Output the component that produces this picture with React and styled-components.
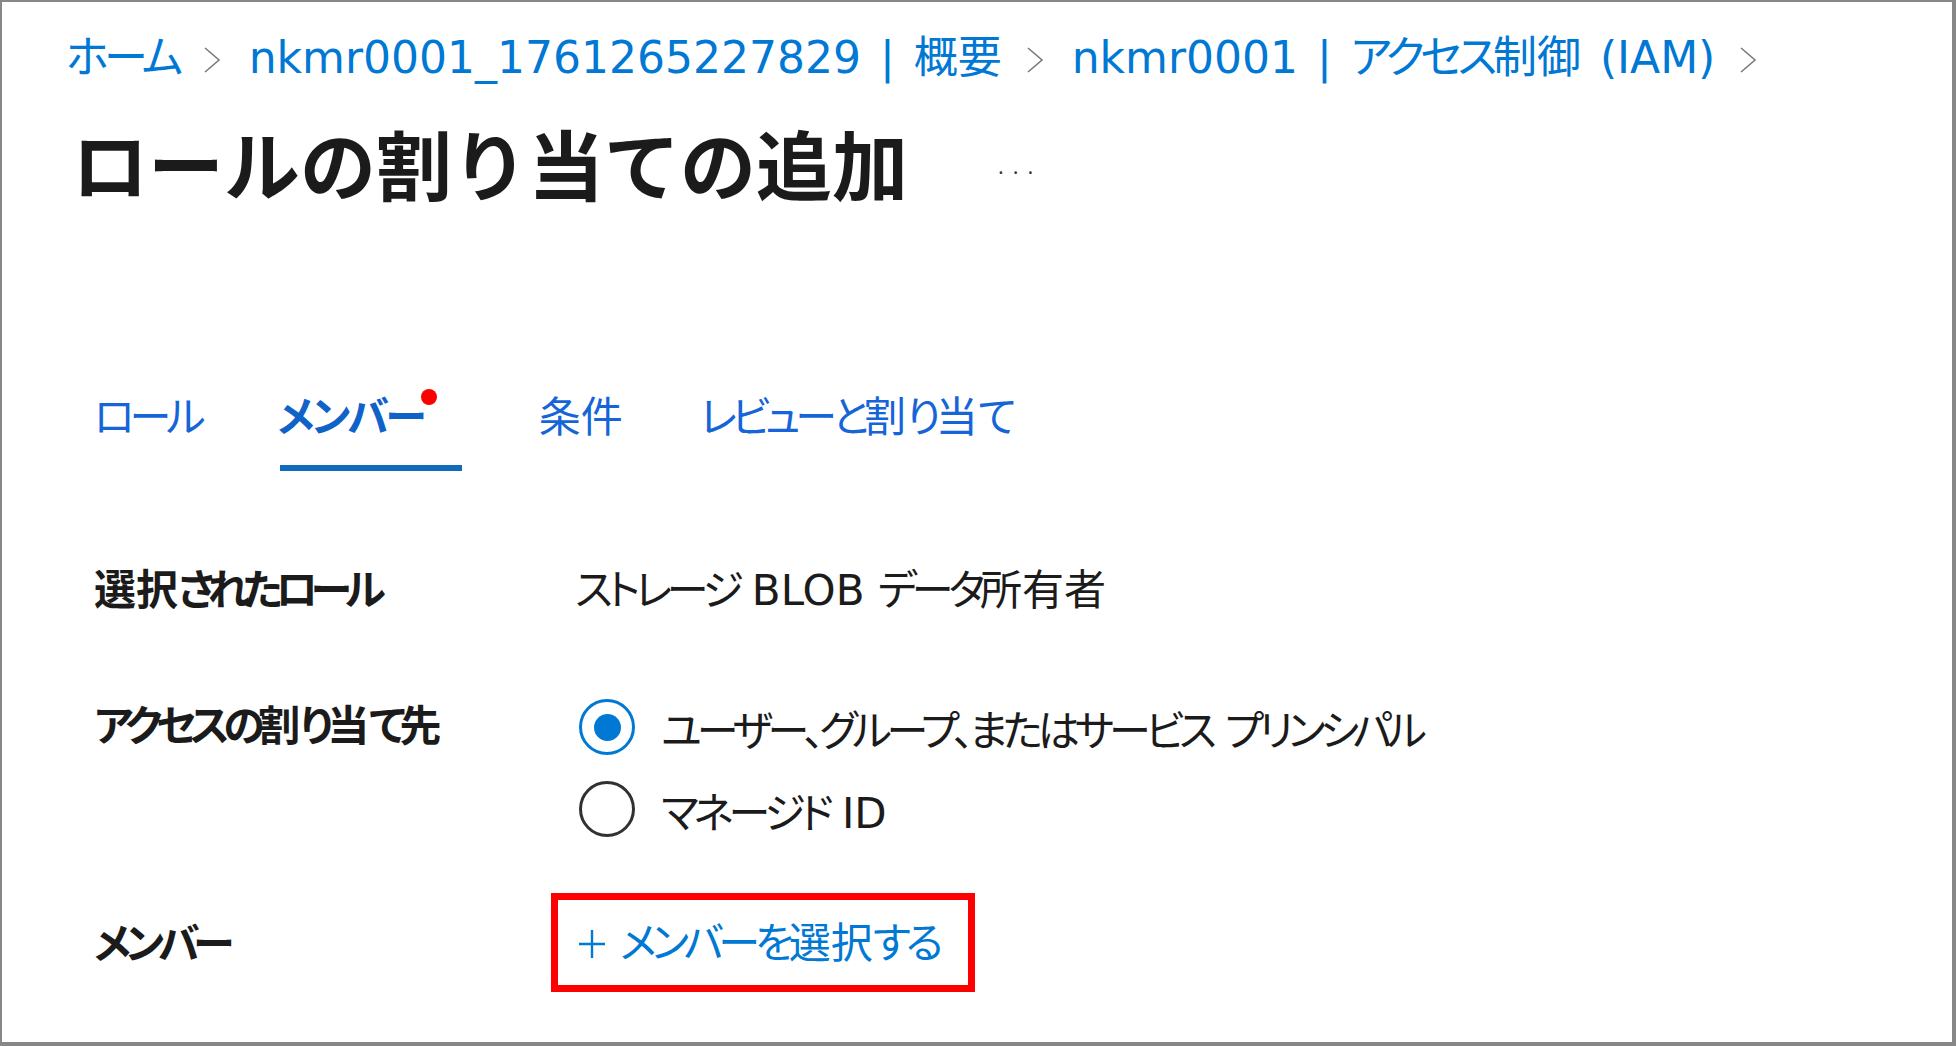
import styled, { createGlobalStyle } from 'styled-components';

const Global = createGlobalStyle`
  html, body { margin: 0; padding: 0; background: #ffffff; }
  body {
    font-family: "DejaVu Sans", "Noto Sans CJK JP", sans-serif;
    font-feature-settings: "palt" 1;
    color: #1b1b1b;
  }
`

const Frame = styled.div`
  box-sizing: border-box;
  width: 1956px;
  height: 1046px;
  border-style: solid;
  border-color: #878787;
  border-width: 2px 4px 4px 2px;
  padding: 26px 0 0 64px;
  overflow: hidden;
`

// Meiryo UI draws kana much narrower than kanji, so kana runs get tightened
const Kana = styled.span`
  letter-spacing: ${p => p.$tight || '-0.12em'};
`

const KANA_RUN = /([\u3040-\u30ff\u3001\u3002]+)/
const isKana = (s) => /^[\u3040-\u30ff\u3001\u3002]+$/.test(s)

const jp = (text, tight) =>
  text.split(KANA_RUN).map((part, i) =>
    isKana(part) ? <Kana key={i} $tight={tight}>{part}</Kana> : part
  )

const Crumbs = styled.nav`
  display: flex;
  align-items: center;
  height: 60px;
  font-size: 44px;
  color: #0078d4;
  white-space: nowrap;
  word-spacing: 5px;
`

const Crumb = styled.span`
  line-height: 60px;
`

const Chevron = styled.svg`
  width: 18px;
  height: 26px;
  margin: 4px 28px 0 24px;
  flex: none;
`

const TitleRow = styled.div`
  display: flex;
  align-items: center;
  margin-top: 29px;
  height: 90px;
`

const Title = styled.h1`
  margin: 0 0 0 6px;
  font-family: "Noto Sans CJK JP", sans-serif;
  font-size: 76px;
  font-weight: 700;
  line-height: 90px;
  color: #1b1b1b;
  font-feature-settings: normal;
`

const More = styled.span`
  margin: 6px 0 0 90px;
  font-family: "Open Sans", sans-serif;
  font-size: 22px;
  color: #333;
  letter-spacing: 9px;
`

const Content = styled.div`
  padding-left: 28px;
`

const Tabs = styled.div`
  display: flex;
  gap: 77px;
  margin-top: 181px;
`

const Tab = styled.div`
  position: relative;
  display: flex;
  align-items: flex-start;
  height: 60px;
  padding: 0 ${p => (p.$active ? '25px' : '0')} 23px 0;
  font-size: 42px;
  line-height: 60px;
  font-weight: ${p => (p.$active ? 700 : 400)};
  color: ${p => (p.$active ? '#0f62c8' : '#1565d8')};

  &::after {
    content: '';
    display: ${p => (p.$active ? 'block' : 'none')};
    position: absolute;
    left: 2px;
    right: 0;
    bottom: 0;
    height: 6px;
    background: #0f6cbd;
  }
`

const Dot = styled.span`
  width: 16px;
  height: 16px;
  border-radius: 50%;
  background: #f00;
  margin: 1px 0 0 -3px;
`

const Form = styled.div`
  display: grid;
  grid-template-columns: 481px 1fr;
  row-gap: 76px;
  margin-top: 90px;
  align-items: start;
`

const Label = styled.div`
  font-size: 42px;
  line-height: 60px;
  font-weight: 700;
  color: #1b1b1b;
`

const Value = styled.div`
  font-size: 42px;
  line-height: 60px;
  color: #1b1b1b;
`

const Radios = styled.div`
  display: flex;
  flex-direction: column;
  gap: 22px;
`

const Option = styled.label`
  display: flex;
  align-items: center;
  gap: 26px;
  height: 60px;
  font-size: 42px;
  color: #1b1b1b;
`

const Circle = styled.span`
  box-sizing: border-box;
  width: 56px;
  height: 56px;
  margin-left: 4px;
  border-radius: 50%;
  border: 3px solid ${p => (p.$checked ? '#0078d4' : '#323130')};
  display: flex;
  align-items: center;
  justify-content: center;
  flex: none;

  &::after {
    content: '';
    display: ${p => (p.$checked ? 'block' : 'none')};
    width: 27px;
    height: 27px;
    border-radius: 50%;
    background: #0078d4;
  }
`

const Highlight = styled.div`
  justify-self: start;
  border: 7px solid #ff0000;
  margin: -22px 0 0 -24px;
  padding: 14px 30px 11px 20px;
`

const AddLink = styled.a`
  display: flex;
  align-items: center;
  gap: 14px;
  font-size: 42px;
  line-height: 60px;
  color: #0078d4;
  text-decoration: none;
`

const Plus = styled.svg`
  width: 28px;
  height: 30px;
  flex: none;
`

const crumbs = ['ホーム', 'nkmr0001_1761265227829 | 概要', 'nkmr0001 | アクセス制御 (IAM)']

const App = () => {
  return (
    <>
      <Global />
      <Frame>
        <Crumbs>
          {crumbs.map((c) => (
            <span key={c} style={{ display: 'contents' }}>
              <Crumb>{jp(c, '-0.1em')}</Crumb>
              <Chevron viewBox="0 0 18 26">
                <polyline points="2,1 16,13 2,25" fill="none" stroke="#7a7a7a" strokeWidth="1.6" />
              </Chevron>
            </span>
          ))}
        </Crumbs>

        <TitleRow>
          <Title>ロールの割り当ての追加</Title>
          <More>...</More>
        </TitleRow>

        <Content>
          <Tabs>
            <Tab>{jp('ロール')}</Tab>
            <Tab $active>{jp('メンバー', '-0.07em')}<Dot /></Tab>
            <Tab>条件</Tab>
            <Tab>{jp('レビューと割り当て')}</Tab>
          </Tabs>

          <Form>
            <Label>{jp('選択されたロール', '-0.17em')}</Label>
            <Value>{jp('ストレージ BLOB データ所有者')}</Value>

            <Label>{jp('アクセスの割り当て先', '-0.15em')}</Label>
            <Radios>
              <Option>
                <Circle $checked />
                <span>{jp('ユーザー、グループ、またはサービス プリンシパル')}</span>
              </Option>
              <Option>
                <Circle />
                <span>{jp('マネージド ID')}</span>
              </Option>
            </Radios>

            <Label>{jp('メンバー', '-0.14em')}</Label>
            <Highlight>
              <AddLink href="#">
                <Plus viewBox="0 0 28 30">
                  <path d="M14 1v28M1 15h26" stroke="#0078d4" strokeWidth="2.4" fill="none" />
                </Plus>
                <span>{jp('メンバーを選択する')}</span>
              </AddLink>
            </Highlight>
          </Form>
        </Content>
      </Frame>
    </>
  )
}

export default App
